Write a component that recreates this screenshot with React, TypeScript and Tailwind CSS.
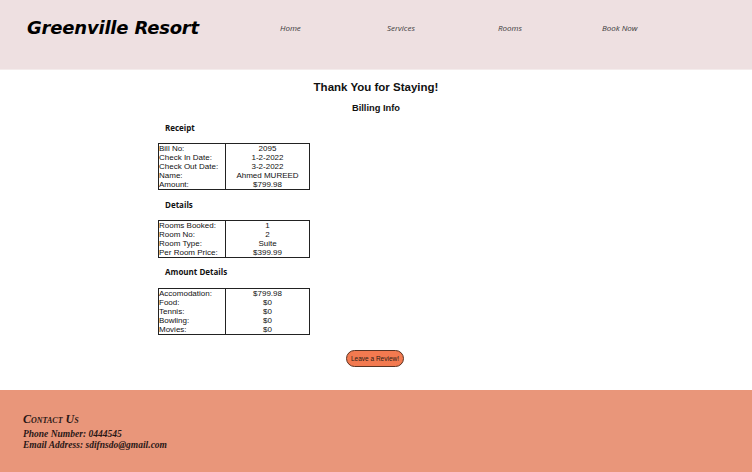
const navItems = ["Home", "Services", "Rooms", "Book Now"];

const receipt: [string, string][] = [
  ["Bill No:", "2095"],
  ["Check In Date:", "1-2-2022"],
  ["Check Out Date:", "3-2-2022"],
  ["Name:", "Ahmed MUREED"],
  ["Amount:", "$799.98"],
];

const details: [string, string][] = [
  ["Rooms Booked:", "1"],
  ["Room No:", "2"],
  ["Room Type:", "Suite"],
  ["Per Room Price:", "$399.99"],
];

const amounts: [string, string][] = [
  ["Accomodation:", "$799.98"],
  ["Food:", "$0"],
  ["Tennis:", "$0"],
  ["Bowling:", "$0"],
  ["Movies:", "$0"],
];

function SectionTitle({ children, className }: { children: string; className?: string }) {
  return (
    <h3
      className={`ml-[7px] h-[10px] text-[8px] font-bold leading-[10px] text-[#111] ${className ?? ""}`}
      style={{ fontFamily: '"Open Sans", "Noto Sans", sans-serif' }}
    >
      {children}
    </h3>
  );
}

function BillTable({ rows, className }: { rows: [string, string][]; className?: string }) {
  return (
    <div
      className={`flex w-[152px] border border-[#222] text-[8px] leading-[9px] text-[#111] ${className ?? ""}`}
      style={{ fontFamily: '"Liberation Sans", Arial, sans-serif' }}
    >
      <div className="w-[67px] border-r border-[#222]">
        {rows.map(([label]) => (
          <div key={label} className="h-[9px] whitespace-nowrap">
            {label}
          </div>
        ))}
      </div>
      <div className="flex-1">
        {rows.map(([label, value]) => (
          <div key={label} className="h-[9px] whitespace-nowrap text-center">
            {value}
          </div>
        ))}
      </div>
    </div>
  );
}

export default function App() {
  return (
    <div className="flex h-[472px] w-[752px] flex-col overflow-hidden bg-white">
      <header className="flex h-[70px] items-start border-b border-[#f4ecec] bg-[#eee0e1]">
        <h1
          className="ml-[27px] mt-[17px] text-[18px] font-bold italic leading-[22px] tracking-[-0.2px] text-black"
          style={{ fontFamily: '"DejaVu Sans", Verdana, sans-serif' }}
        >
          Greenville Resort
        </h1>
        <nav
          className="ml-[81px] mt-[23px] flex text-[8px] italic leading-[10px] text-[#3a3a3a]"
          style={{ fontFamily: '"Open Sans", "Noto Sans", sans-serif' }}
        >
          {navItems.map((item, i) => (
            <a key={item} className={i === 0 ? "w-[107px]" : i === 1 ? "w-[111px]" : i === 2 ? "w-[104px]" : ""}>
              {item}
            </a>
          ))}
        </nav>
      </header>

      <main className="flex h-[320px] flex-col" style={{ fontFamily: '"Liberation Sans", Arial, sans-serif' }}>
        <h1 className="mt-[10px] h-[14px] text-center text-[11.5px] font-bold leading-[14px] text-[#111]">
          Thank You for Staying!
        </h1>
        <h2 className="mt-[8px] h-[12px] text-center text-[9.3px] font-bold leading-[12px] text-[#111]">
          Billing Info
        </h2>

        <div className="ml-[158px] flex flex-col">
          <SectionTitle className="mt-[9px]">Receipt</SectionTitle>
          <BillTable rows={receipt} className="mt-[10px]" />
          <SectionTitle className="mt-[10px]">Details</SectionTitle>
          <BillTable rows={details} className="mt-[10px]" />
          <SectionTitle className="mt-[9px]">Amount Details</SectionTitle>
          <BillTable rows={amounts} className="mt-[11px]" />
        </div>

        <div className="mt-[15px] flex justify-center pr-[2px]">
          <button className="h-[17px] w-[58px] rounded-full border border-[#5a3424] bg-[#f37a50] text-[6.5px] leading-[15px] text-[#2a1a14]">
            Leave a Review!
          </button>
        </div>
      </main>

      <footer
        className="flex flex-1 flex-col bg-[#e9967a] pl-[23px] pt-[22px] font-bold italic text-[#2a1616]"
        style={{ fontFamily: '"Liberation Serif", "Times New Roman", serif' }}
      >
        <h4 className="h-[14px] text-[12px] leading-[14px] [font-variant:small-caps]">Contact Us</h4>
        <p className="mt-[3px] text-[9.5px] leading-[11px]">Phone Number: 0444545</p>
        <p className="text-[9.5px] leading-[11px]">Email Address: sdifnsdo@gmail.com</p>
      </footer>
    </div>
  );
}
